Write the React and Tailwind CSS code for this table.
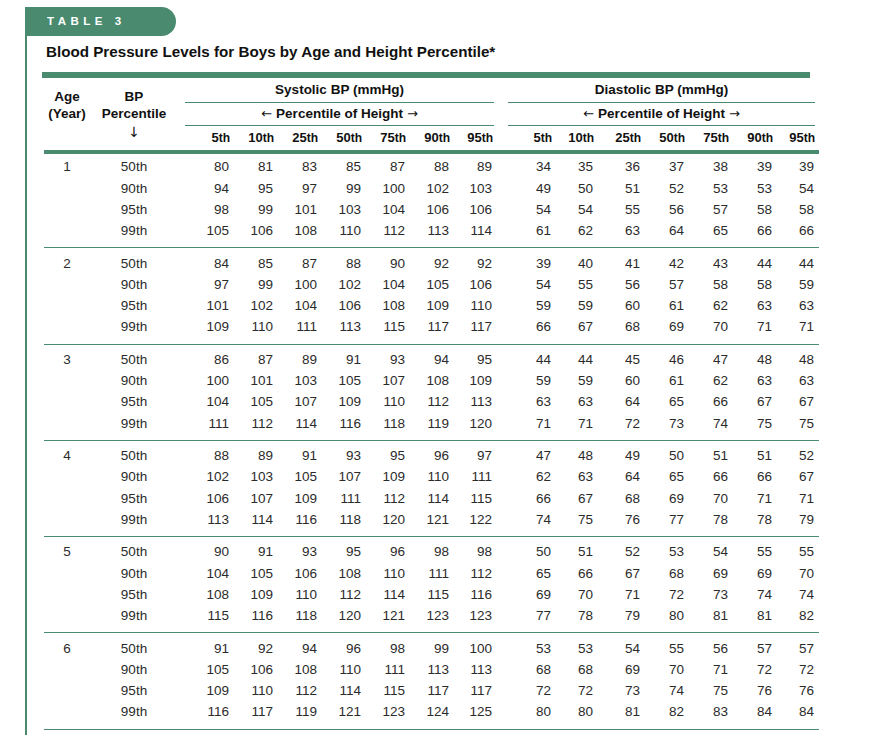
import React from 'react';

const AGES = [
  {
    age: 1,
    rows: [
      ['50th', [80, 81, 83, 85, 87, 88, 89], [34, 35, 36, 37, 38, 39, 39]],
      ['90th', [94, 95, 97, 99, 100, 102, 103], [49, 50, 51, 52, 53, 53, 54]],
      ['95th', [98, 99, 101, 103, 104, 106, 106], [54, 54, 55, 56, 57, 58, 58]],
      ['99th', [105, 106, 108, 110, 112, 113, 114], [61, 62, 63, 64, 65, 66, 66]],
    ],
  },
  {
    age: 2,
    rows: [
      ['50th', [84, 85, 87, 88, 90, 92, 92], [39, 40, 41, 42, 43, 44, 44]],
      ['90th', [97, 99, 100, 102, 104, 105, 106], [54, 55, 56, 57, 58, 58, 59]],
      ['95th', [101, 102, 104, 106, 108, 109, 110], [59, 59, 60, 61, 62, 63, 63]],
      ['99th', [109, 110, 111, 113, 115, 117, 117], [66, 67, 68, 69, 70, 71, 71]],
    ],
  },
  {
    age: 3,
    rows: [
      ['50th', [86, 87, 89, 91, 93, 94, 95], [44, 44, 45, 46, 47, 48, 48]],
      ['90th', [100, 101, 103, 105, 107, 108, 109], [59, 59, 60, 61, 62, 63, 63]],
      ['95th', [104, 105, 107, 109, 110, 112, 113], [63, 63, 64, 65, 66, 67, 67]],
      ['99th', [111, 112, 114, 116, 118, 119, 120], [71, 71, 72, 73, 74, 75, 75]],
    ],
  },
  {
    age: 4,
    rows: [
      ['50th', [88, 89, 91, 93, 95, 96, 97], [47, 48, 49, 50, 51, 51, 52]],
      ['90th', [102, 103, 105, 107, 109, 110, 111], [62, 63, 64, 65, 66, 66, 67]],
      ['95th', [106, 107, 109, 111, 112, 114, 115], [66, 67, 68, 69, 70, 71, 71]],
      ['99th', [113, 114, 116, 118, 120, 121, 122], [74, 75, 76, 77, 78, 78, 79]],
    ],
  },
  {
    age: 5,
    rows: [
      ['50th', [90, 91, 93, 95, 96, 98, 98], [50, 51, 52, 53, 54, 55, 55]],
      ['90th', [104, 105, 106, 108, 110, 111, 112], [65, 66, 67, 68, 69, 69, 70]],
      ['95th', [108, 109, 110, 112, 114, 115, 116], [69, 70, 71, 72, 73, 74, 74]],
      ['99th', [115, 116, 118, 120, 121, 123, 123], [77, 78, 79, 80, 81, 81, 82]],
    ],
  },
  {
    age: 6,
    rows: [
      ['50th', [91, 92, 94, 96, 98, 99, 100], [53, 53, 54, 55, 56, 57, 57]],
      ['90th', [105, 106, 108, 110, 111, 113, 113], [68, 68, 69, 70, 71, 72, 72]],
      ['95th', [109, 110, 112, 114, 115, 117, 117], [72, 72, 73, 74, 75, 76, 76]],
      ['99th', [116, 117, 119, 121, 123, 124, 125], [80, 80, 81, 82, 83, 84, 84]],
    ],
  },
];

const PCTS = ['5', '10', '25', '50', '75', '90', '95'];

// one template shared by header + body so the columns line up
const COLS =
  'grid grid-cols-[48px_86px_52px_44px_44px_44px_44px_44px_43px_59px_42px_47px_44px_44px_44px_42px]';

const Label = ({ n }) => (
  <div className="flex items-center justify-end -mr-[1px]">
    <span className="text-[13px]">{n}</span>
    <span className="text-[12px]">th</span>
  </div>
);

// Liberation's arrows are tiny, DejaVu's are closer to the print
const Arrow = ({ children }) => (
  <span className="font-['DejaVu_Sans',sans-serif] font-normal text-[13px]">{children}</span>
);

const Sub = ({ pad }) => (
  <div className={`col-span-7 flex items-center justify-center gap-[4px] ${pad}`}>
    <Arrow>←</Arrow>
    <span>Percentile of Height</span>
    <Arrow>→</Arrow>
  </div>
);

const Header = () => (
  <div className={`${COLS} grid-rows-[24px_1px_22px_1px_24px] font-bold text-[13.5px] text-[#111]`}>
    <div className="row-span-5 flex flex-col items-center pt-[11px] leading-[16.5px]">
      <span>Age</span>
      <span>(Year)</span>
    </div>
    <div className="row-span-5 flex flex-col items-center pt-[11px] leading-[16.5px]">
      <span>BP</span>
      <span>Percentile</span>
      <span className="font-['DejaVu_Sans',sans-serif] font-normal text-[14px] leading-[20px]">↓</span>
    </div>

    <div className="col-span-7 flex items-center justify-center pl-[10px]">Systolic BP (mmHg)</div>
    <div className="col-span-7 flex items-center justify-center pl-[17px]">Diastolic BP (mmHg)</div>

    <div className="col-span-7 ml-[8px] -mr-[2px] bg-[#4a8b6f]" />
    <div className="col-span-7 ml-[16px] -mr-[1px] bg-[#4a8b6f]" />

    <Sub pad="pl-[10px]" />
    <Sub pad="pl-[17px]" />

    <div className="col-span-7 ml-[8px] -mr-[2px] bg-[#4a8b6f]" />
    <div className="col-span-7 ml-[16px] -mr-[1px] bg-[#4a8b6f]" />

    {PCTS.map((p) => <Label key={`s${p}`} n={p} />)}
    {PCTS.map((p) => <Label key={`d${p}`} n={p} />)}
  </div>
);

const Group = ({ group, first }) => (
  <div className={`ml-[1px] w-[775px] border-b border-[#4a8b6f] pb-[5.5px] ${first ? 'pt-[3px]' : 'pt-[5px]'}`}>
    <div className={`${COLS} -ml-[1px] auto-rows-[21.2px] text-[13.5px] text-[#2b2b2b]`}>
      {group.rows.map(([bp, sys, dia], i) => (
        <React.Fragment key={bp}>
          <div className="flex items-center justify-center">{i === 0 ? group.age : ''}</div>
          <div className="flex items-center justify-center">{bp}</div>
          {[...sys, ...dia].map((v, j) => (
            <div key={j} className="flex items-center justify-end">
              {v}
            </div>
          ))}
        </React.Fragment>
      ))}
    </div>
  </div>
);

export default function App() {
  return (
    <div className="w-[871px] h-[735px] overflow-hidden bg-white font-['Liberation_Sans',Arial,sans-serif]">
      <div className="ml-[25px] mt-[7px] min-h-[728px] border-l-2 border-[#4a8b6f]">
        {/* tab */}
        <div className="-ml-[2px] w-[151px] h-[29px] bg-[#4a8b6f] rounded-r-full flex items-center pl-[22px]">
          <span className="text-white font-bold text-[11.5px] tracking-[4.5px]">TABLE 3</span>
        </div>

        <h1 className="pl-[19px] mt-[6px] h-[20px] leading-[20px] font-bold text-[15.2px] text-[#111]">
          Blood Pressure Levels for Boys by Age and Height Percentile*
        </h1>

        <div className="ml-[16px] mt-[10px]">
          <div className="-ml-[1px] w-[768px] h-[6px] bg-[#4a8b6f]" />
          <Header />
          <div className="ml-[1px] w-[775px] h-[4px] bg-[#4a8b6f]" />
          {AGES.map((g, i) => (
            <Group key={g.age} group={g} first={i === 0} />
          ))}
        </div>
      </div>
    </div>
  );
}
